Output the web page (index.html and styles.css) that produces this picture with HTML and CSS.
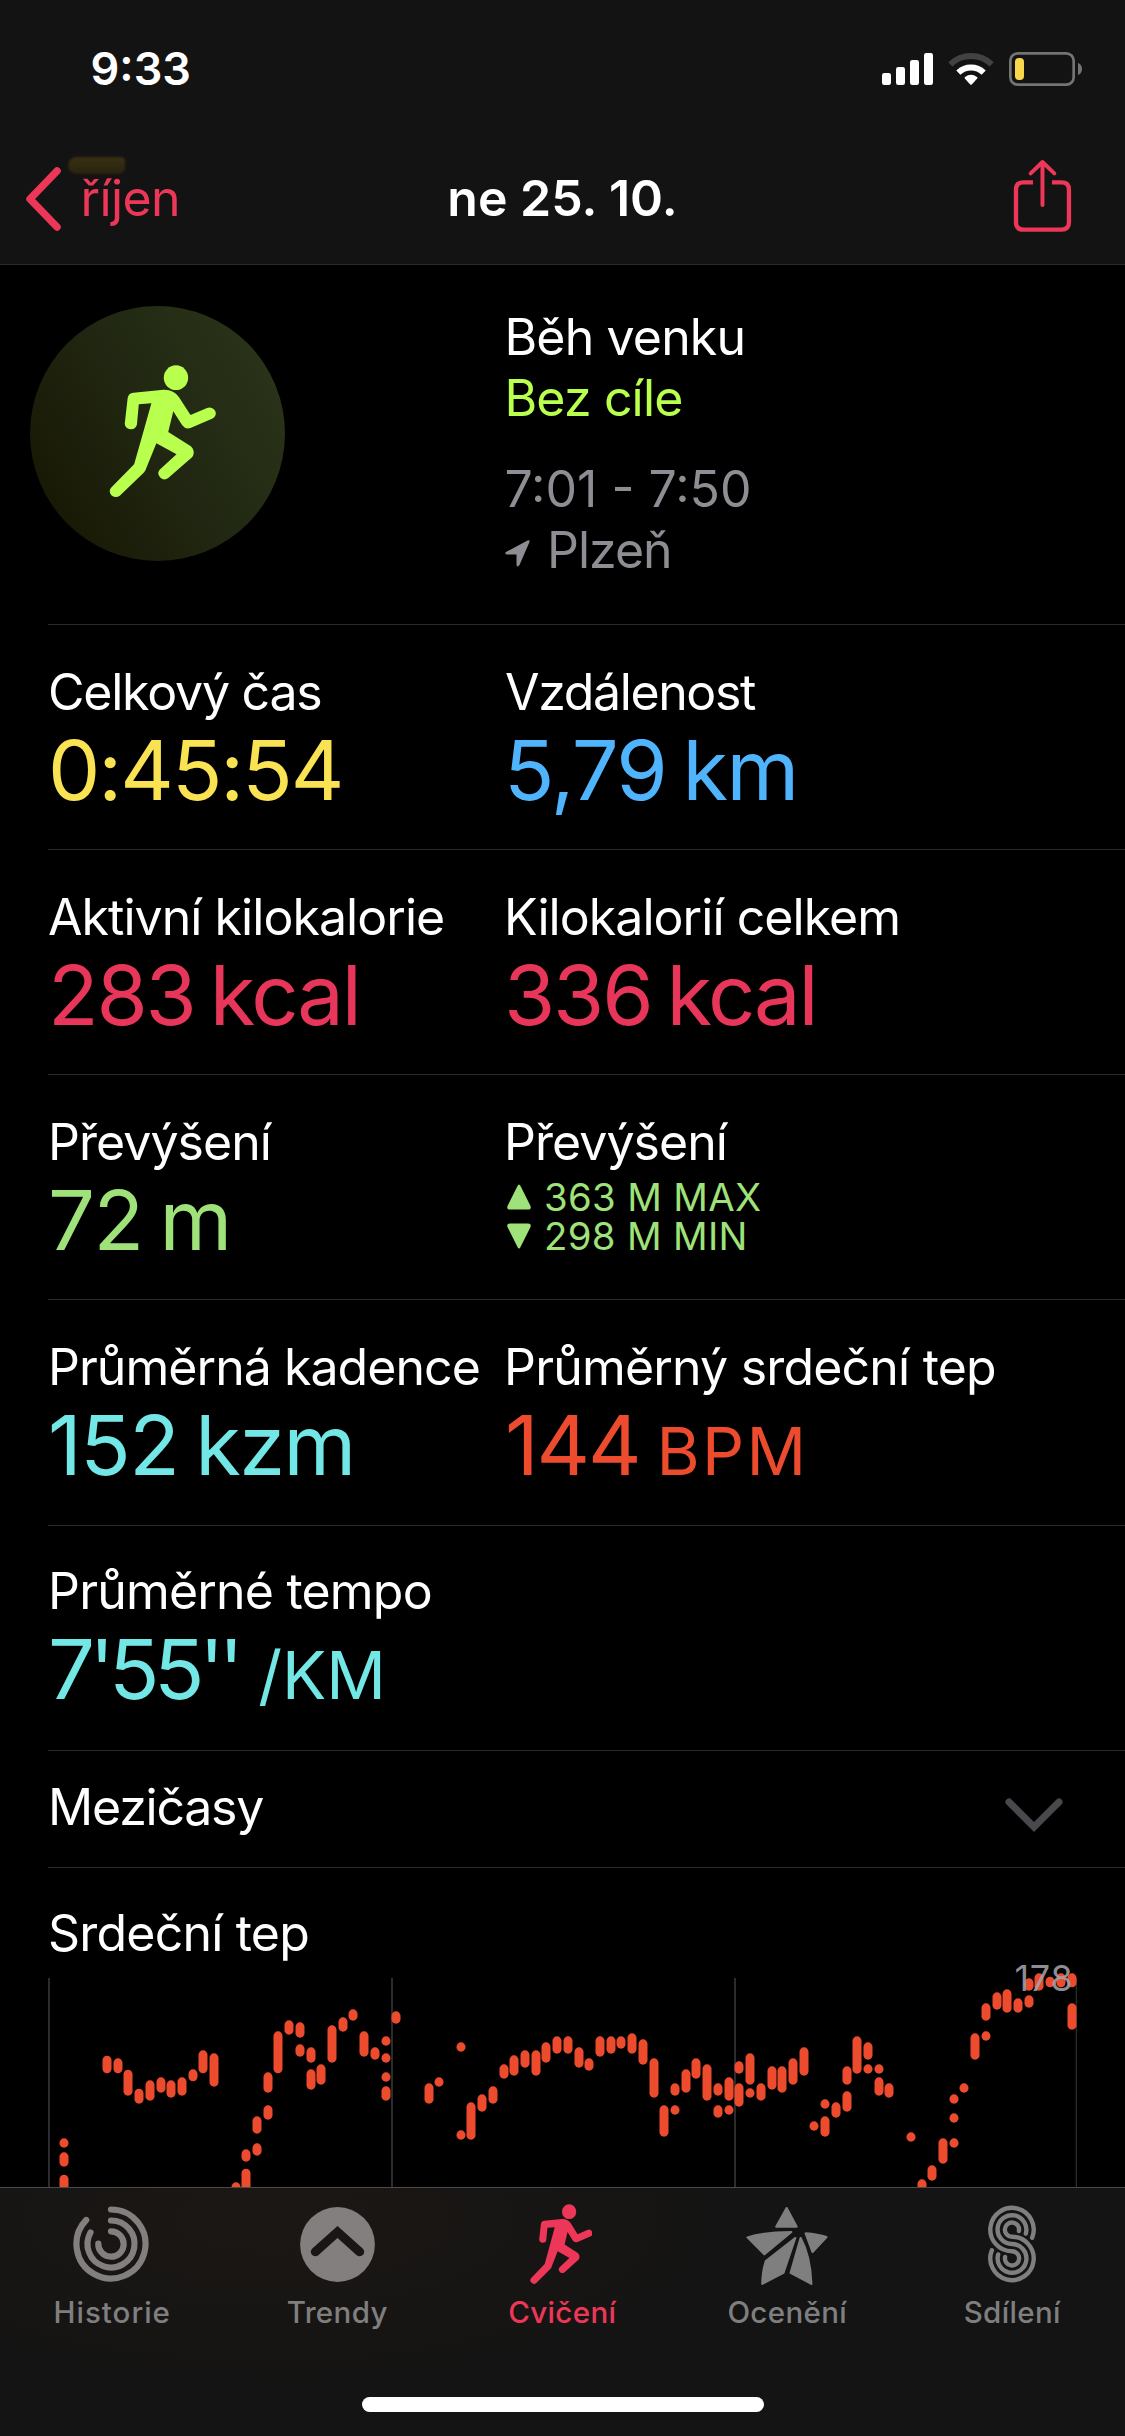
FILE: index.html
```html
<!DOCTYPE html>
<html lang="cs">
<head>
<meta charset="utf-8">
<title>Cvičení</title>
<link rel="stylesheet" href="styles.css">
</head>
<body>
<svg class="defs" width="0" height="0" aria-hidden="true">
  <symbol id="runner" viewBox="304 253 298 400" preserveAspectRatio="none">
    <ellipse cx="490.500" cy="291" rx="34" ry="37"/>
    <path d="M372 336 L456 327 Q485 326 499 350 L531 403 L577 382 A17 17 0 0 1 591 414 L531 442 Q517 447 508 434 L483 392 L469 454 L532 497 Q546 511 536 529 L469 592 A17 18 0 0 1 445 567 L492 521 L436 488 L408 562 Q406 570 402 575 L334 645 A17 17 0 0 1 311 620 L374 551 L398 460 L422 368 L387 371 L382 430 A17 17 0 0 1 348 428 L356 352 Q358 337 372 336 Z"/>
  </symbol>
</svg>

<header class="header">
  <div class="status">
    <span class="status-time">9:33</span>
    <svg class="status-icons" viewBox="30 30 612 114">
      <g fill="#fff">
        <rect x="36" y="99" width="27" height="36" rx="7"/>
        <rect x="78" y="81" width="27" height="54" rx="7"/>
        <rect x="120" y="60" width="27" height="75" rx="7"/>
        <rect x="162" y="39" width="27" height="96" rx="7"/>
        <path d="M285 116 Q282 113 285 111 Q303 98 321 111 Q325 113 321 116 L306 133 Q303 136 300 133 Z"/>
      </g>
      <path d="M241 73 A90 90 0 0 1 365 73" fill="none" stroke="#424242" stroke-width="18"/>
      <path d="M265 98 A55 55 0 0 1 341 98" fill="none" stroke="#fff" stroke-width="18"/>
      <rect x="421" y="40" width="190" height="94" rx="22" fill="none" stroke="#747474" stroke-width="8"/>
      <rect x="435" y="54" width="27" height="66" rx="12" fill="#f9d74a"/>
      <path d="M624 68 Q636 74 636 87 Q636 100 624 105 Z" fill="#747474"/>
    </svg>
  </div>
  <nav class="nav">
    <a class="back">
      <svg class="back-icon" viewBox="0 0 38 66"><path d="M33 5 L6 33 L33 61" fill="none" stroke="#ed3758" stroke-width="7.500" stroke-linecap="round" stroke-linejoin="round"/></svg>
      <span class="back-label">říjen</span>
    </a>
    <h1 class="title">ne 25. 10.</h1>
    <svg class="share" viewBox="426 354 184 228" fill="none" stroke="#ed3758" stroke-width="13" stroke-linecap="round" stroke-linejoin="round">
      <path d="M489 427 H460 Q438 427 438 449 V547 Q438 569 460 569 H575 Q597 569 597 547 V449 Q597 427 575 427 H546" stroke-linecap="butt"/>
      <path d="M517.500 367 V495 M482 400 L517.500 366 L553 400" stroke-width="12"/>
    </svg>
  </nav>
  <div class="smudge"></div>
</header>

<main class="content">
  <section class="hero">
    <div class="badge"><svg class="badge-icon"><use href="#runner"/></svg></div>
    <div class="hero-text">
      <p class="hero-line">Běh venku</p>
      <p class="hero-line goal">Bez cíle</p>
      <p class="hero-line muted time">7:01 - 7:50</p>
      <p class="hero-line muted place">
        <svg class="place-icon" viewBox="0 0 26 28"><path d="M1 13 L22.500 1.500 Q25 .5 24.500 3 L14.500 26 Q12 29 11.500 25.500 V15.500 H2 Q-1 15 1 13 Z" fill="#8e8d94"/></svg>
        Plzeň
      </p>
    </div>
  </section>

  <section class="metrics">
    <div class="cell"><h2 class="label tight">Celkový čas</h2><p class="value duration">0:45:54</p></div>
    <div class="cell"><h2 class="label tighter">Vzdálenost</h2><p class="value distance">5,79 km</p></div>
  </section>
  <section class="metrics">
    <div class="cell"><h2 class="label">Aktivní kilokalorie</h2><p class="value energy">283 kcal</p></div>
    <div class="cell"><h2 class="label">Kilokalorií celkem</h2><p class="value energy">336 kcal</p></div>
  </section>
  <section class="metrics">
    <div class="cell"><h2 class="label">Převýšení</h2><p class="value climb">72 m</p></div>
    <div class="cell">
      <h2 class="label">Převýšení</h2>
      <div class="range">
        <p class="range-line"><svg class="tri" viewBox="0 0 24 26"><path d="M10.500 2 Q12 -1 13.500 2 L23.500 22 Q24.500 25.500 21 25.500 H3 Q-.5 25.500 .5 22 Z" fill="#9fe27a"/></svg>363 M MAX</p>
        <p class="range-line"><svg class="tri" viewBox="0 0 24 26"><path d="M10.500 24 Q12 27 13.500 24 L23.500 4 Q24.500 .5 21 .5 H3 Q-.5 .5 .5 4 Z" fill="#9fe27a"/></svg>298 M MIN</p>
      </div>
    </div>
  </section>
  <section class="metrics metrics-tall">
    <div class="cell"><h2 class="label">Průměrná kadence</h2><p class="value pace">152 kzm</p></div>
    <div class="cell"><h2 class="label loose">Průměrný srdeční tep</h2><p class="value pulse">144<span class="unit bpm">BPM</span></p></div>
  </section>
  <section class="metrics metrics-last">
    <div class="cell"><h2 class="label loose">Průměrné tempo</h2><p class="value pace minutes">7'55''<span class="unit per-km">/KM</span></p></div>
  </section>

  <section class="splits">
    <h2 class="label tight">Mezičasy</h2>
    <svg class="chevron" viewBox="0 0 58 34"><path d="M4 4 L29 29 L54 4" fill="none" stroke="#49484c" stroke-width="7" stroke-linecap="round"/></svg>
  </section>

  <section class="heart">
    <h2 class="label loose">Srdeční tep</h2>
    <svg class="chart" viewBox="0 1963 1077 224" width="1077" height="224">
      <g fill="#2c2c2e">
        <rect x="48" y="1978" width="2" height="209"/>
        <rect x="391" y="1978" width="2" height="209"/>
        <rect x="734" y="1978" width="2" height="209"/>
        <rect x="1075.700" y="1978" width="1.300" height="209"/>
      </g>
      <g id="bars" fill="#ec4b2e"></g>
      <text class="chart-max" x="1014.500" y="1990.500">178</text>
    </svg>
  </section>
</main>

<footer class="tabbar">
  <div class="tabs">
    <a class="tab">
      <span class="tab-icon"><svg class="rings" width="76" height="76" viewBox="-38 -38 76 76" fill="none" stroke="#827f7e" stroke-width="6.200" stroke-linecap="round">
        <path d="M0 -34.500 A34.500 34.500 0 1 1 -24.800 -24"/>
        <path d="M0 -23.500 A23.500 23.500 0 1 1 -20.500 -11.500"/>
        <path d="M0 -12.700 A12.700 12.700 0 1 1 -12.700 -.5"/>
      </svg></span>
      <span class="tab-label wide">Historie</span>
    </a>
    <a class="tab">
      <span class="tab-icon"><svg width="75" height="75" viewBox="-37.500 -37.500 75 75">
        <circle r="37.400" fill="#827f7e"/>
        <path d="M-22.200 7.300 L0 -12.500 L22.200 7.300" fill="none" stroke="#191614" stroke-width="9" stroke-linecap="round"/>
      </svg></span>
      <span class="tab-label">Trendy</span>
    </a>
    <a class="tab active">
      <span class="tab-icon"><svg class="tab-runner"><use href="#runner"/></svg></span>
      <span class="tab-label">Cvičení</span>
    </a>
    <a class="tab">
      <span class="tab-icon"><svg class="star" viewBox="506 76 234 240" preserveAspectRatio="none" fill="#7f7f7f" stroke="#7f7f7f" stroke-width="6" stroke-linejoin="round">
        <path d="M622 82 L650 138 H593 Z"/>
        <path d="M513 170 Q560 154 635 154 L560 221 Z"/>
        <path d="M675 158 Q710 161 733 169 L694 214 Z"/>
        <path d="M646 172 L564 241 Q555 270 554 310 L613 277 Z"/>
        <path d="M661 172 L633 277 L691 310 Q688 225 661 172 Z"/>
      </svg></span>
      <span class="tab-label">Ocenění</span>
    </a>
    <a class="tab">
      <span class="tab-icon"><svg class="sharing" width="50" height="78" viewBox="-25 -24.600 50 78" fill="none" stroke="#7f7f7f" stroke-width="4.400" stroke-linecap="round">
        <path d="M20.100 8.200 A21.700 21.700 0 1 0 0 21.700 A7.100 7.100 0 1 1 -6.900 27.300"/>
        <path d="M13.800 4 A14.400 14.400 0 1 0 0 14.400 A14.400 14.400 0 1 1 -13.800 24.800"/>
        <path d="M6.900 1.500 A7.100 7.100 0 1 0 0 7.100 A21.700 21.700 0 1 1 -20.100 20.600"/>
      </svg></span>
      <span class="tab-label">Sdílení</span>
    </a>
  </div>
  <div class="home-indicator"></div>
</footer>
<script src="script.js"></script>
</body>
</html>
```
FILE: styles.css
```css
* { box-sizing: border-box; }

body {
  margin: 0;
  width: 1125px;
  height: 2436px;
  display: flex;
  flex-direction: column;
  overflow: hidden;
  background: #000;
  color: #fff;
  font-family: Inter, "Liberation Sans", sans-serif;
}

h1, h2, p { margin: 0; font-weight: 400; }
svg { display: block; flex: none; }
.defs { position: absolute; }

/* Header */
.header {
  position: relative;
  flex: none;
  height: 265px;
  background: #131313;
  border-bottom: 1px solid #2a2a2a;
}
.status {
  display: flex;
  justify-content: space-between;
  height: 134px;
  padding: 42px 41px 0 90.5px;
}
.status-time { font-size: 45px; line-height: 54px; font-weight: 600; }
.status-icons { width: 204px; height: 38px; margin-top: 8px; }
.nav {
  display: grid;
  grid-template-columns: 1fr auto 1fr;
  padding: 24px 51.7px 0 24px;
}
.back { display: flex; }
.back-icon { width: 38px; height: 66px; margin-top: 8px; }
.back-label {
  margin: 10px 0 0 18.5px;
  font-size: 50px;
  line-height: 60px;
  letter-spacing: -0.6px;
  color: #ed3758;
}
.title {
  margin: 10px 0 0 27.7px;
  font-size: 50px;
  line-height: 60px;
  font-weight: 600;
}
.share { width: 61.3px; height: 76px; justify-self: end; }
.smudge {
  position: absolute;
  left: 68px;
  top: 157px;
  width: 57px;
  height: 17px;
  border-radius: 9px 4px 7px 9px;
  background: linear-gradient(#3a3013, #29230f);
  filter: blur(1px);
}

/* Workout summary */
.content { flex: none; height: 1922px; padding-left: 48px; overflow: hidden; }
.hero {
  display: grid;
  grid-template-columns: 456.5px 1fr;
  height: 360px;
  border-bottom: 1px solid #2b2b2d;
}
.badge {
  width: 255px;
  height: 255px;
  margin: 41px 0 0 -18px;
  padding: 58.5px 0 0 79px;
  border-radius: 50%;
  background: linear-gradient(60deg, #191a06 15%, #212712 50%, #2a3419 90%);
}
.badge-icon { width: 107px; height: 133.3px; fill: #b9ff4d; }
.hero-text { padding-top: 41.6px; }
.hero-line { font-size: 50px; line-height: 61px; letter-spacing: -0.85px; }
.goal { color: #b9ff4d; }
.muted { color: #8e8d94; }
.time { margin-top: 30px; letter-spacing: 0; }
.place { display: flex; letter-spacing: -1px; }
.place-icon { width: 26px; height: 28px; margin: 19px 16px 0 0.5px; }

/* Metric rows */
.metrics {
  display: grid;
  grid-template-columns: 456px 1fr;
  height: 225px;
  padding-top: 36.8px;
  border-bottom: 1px solid #2b2b2d;
}
.metrics-tall { height: 226px; }
.metrics-last { padding-top: 35.1px; }
.cell { white-space: nowrap; }
.label { font-size: 50px; line-height: 60px; letter-spacing: -0.95px; }
.label.loose { letter-spacing: -0.8px; }
.label.tight { letter-spacing: -1.22px; }
.label.tighter { letter-spacing: -1.36px; margin-left: 1px; }
.value { margin-top: 3px; font-size: 83px; line-height: 90px; }
.duration { color: #fae353; letter-spacing: -2px; }
.distance { color: #4fb4fc; letter-spacing: -1.6px; word-spacing: -5.5px; }
.energy { color: #e8365a; letter-spacing: -2.2px; word-spacing: -6px; }
.climb { color: #9fe27a; letter-spacing: -1.5px; word-spacing: -5px; }
.pace { color: #73e7e5; letter-spacing: -1.5px; word-spacing: -5px; }
.pulse { color: #ec4b2e; letter-spacing: -2.2px; margin-left: 1px; }
.minutes { letter-spacing: -5.4px; }
.unit { font-size: 66px; }
.bpm { margin-left: 17px; letter-spacing: 2.4px; }
.per-km { margin-left: 20px; letter-spacing: 0; }
.range { padding: 6px 0 0 3px; }
.range-line {
  display: flex;
  align-items: center;
  gap: 13px;
  font-size: 38.3px;
  line-height: 39px;
  letter-spacing: 0.35px;
  color: #9fe27a;
}
.tri { width: 24px; height: 26px; }

/* Splits and heart-rate chart */
.splits {
  display: flex;
  justify-content: space-between;
  height: 117px;
  padding: 25.8px 62px 0 0;
  border-bottom: 1px solid #2b2b2d;
}
.chevron { width: 58px; height: 34px; margin-top: 21.5px; }
.heart { padding-top: 35px; }
.chart { margin-left: -48px; overflow: visible; }
.chart-max { font-size: 36px; letter-spacing: 0.7px; fill: #a3a2a9; fill-opacity: 0.88; }

/* Tab bar */
.tabbar {
  flex: none;
  height: 249px;
  padding-top: 14px;
  border-top: 1px solid #4b4a4a;
  background: radial-gradient(ellipse 520px 190px at 270px 30px, #1b1714, #141414);
}
.tabs { display: grid; grid-template-columns: repeat(5, 1fr); }
.tab { display: flex; flex-direction: column; align-items: center; color: #7f7f7f; }
.tab.active { color: #ed3758; }
.tab-icon { display: flex; align-items: center; justify-content: center; height: 84px; }
.rings { margin-right: 3px; }
.tab-runner { width: 62.5px; height: 80.5px; margin-right: 3px; fill: #ed3758; }
.star { width: 84px; height: 80px; margin: 3px 2px 0 0; }
.sharing { margin-right: 2px; }
.tab-label {
  margin: 7.5px 0.5px 0 0;
  font-size: 29.5px;
  line-height: 36px;
  font-weight: 500;
  letter-spacing: 0.35px;
}
.tab-label.wide { letter-spacing: 1px; }
.home-indicator {
  width: 402px;
  height: 15px;
  margin: 67.5px auto 0;
  border-radius: 8px;
  background: #fff;
}
```
FILE: script.js
```js
// Heart-rate samples: for every column its centre, then top/bottom pairs, at 3 units per pixel.
const segments = [
  { x: 30, columns: [
    [102, 535,563, 577,620, 644,700], [231, 287,340], [264, 295,340], [294, 329,407],
    [327, 386,431], [360, 361,422], [393, 352,398], [423, 361,413], [456, 352,407],
    [489, 328,364], [519, 271,340], [552, 280,380], [618, 667,700], [648, 568,605, 626,700],
    [681, 469,521, 550,587], [714, 337,398, 436,479], [744, 214,340], [777, 181,224],
    [810, 187,233, 253,290], [843, 262,308, 328,389], [873, 313,374], [906, 196,308],
    [939, 172,215], [969, 148,182], [1002, 214,290], [1035, 262,299],
    [1068, 229,257, 280,308, 337,365, 379,422]
  ] },
  { x: 380, columns: [
    [48, 154,191], [147, 370,431], [177, 352,380], [243, 247,275, 511,539], [273, 427,539],
    [306, 403,455], [339, 379,431], [372, 313,356], [402, 286,347], [435, 271,323],
    [468, 271,347], [498, 247,308], [531, 229,281], [564, 229,281], [597, 262,323],
    [627, 295,332], [660, 229,290], [693, 229,281], [723, 229,266], [756, 220,281],
    [789, 238,314], [822, 295,413], [852, 436,530], [885, 370,407, 436,464], [918, 328,398],
    [948, 295,356], [981, 313,422], [1014, 370,407, 436,473], [1047, 352,422, 436,464],
    [1077, 304,341, 370,440]
  ] },
  { x: 740, columns: [
    [30, 280,374, 385,413], [63, 370,422], [96, 319,389], [126, 319,398], [159, 295,374],
    [192, 262,347], [222, 484,512], [255, 418,446, 469,530], [288, 427,473],
    [321, 319,374, 394,455], [351, 229,341], [384, 247,299, 313,341], [417, 313,341, 352,407],
    [447, 370,413], [513, 517,545], [546, 658,700], [576, 616,662], [609, 535,611],
    [642, 403,431, 460,488, 535,563], [672, 370,398], [705, 220,299], [738, 130,182, 214,242],
    [771, 97,149], [801, 88,158], [834, 115,158], [867, 55,92, 106,143], [897, 40,92],
    [930, 50,82], [963, 40,82], [996, 40,82, 130,209]
  ] }
];

const bars = document.getElementById("bars");
for (const { x, columns } of segments) {
  for (const [centre, ...spans] of columns) {
    for (let i = 0; i < spans.length; i += 2) {
      const bar = document.createElementNS("http://www.w3.org/2000/svg", "rect");
      bar.setAttribute("x", x + (centre - 13.5) / 3);
      bar.setAttribute("y", 1960 + spans[i] / 3);
      bar.setAttribute("width", 9);
      // Columns that run below the fold end at the tab bar.
      bar.setAttribute("height", (Math.min(spans[i + 1], 694) - spans[i]) / 3);
      bar.setAttribute("rx", 4.5);
      bars.appendChild(bar);
    }
  }
}
```
